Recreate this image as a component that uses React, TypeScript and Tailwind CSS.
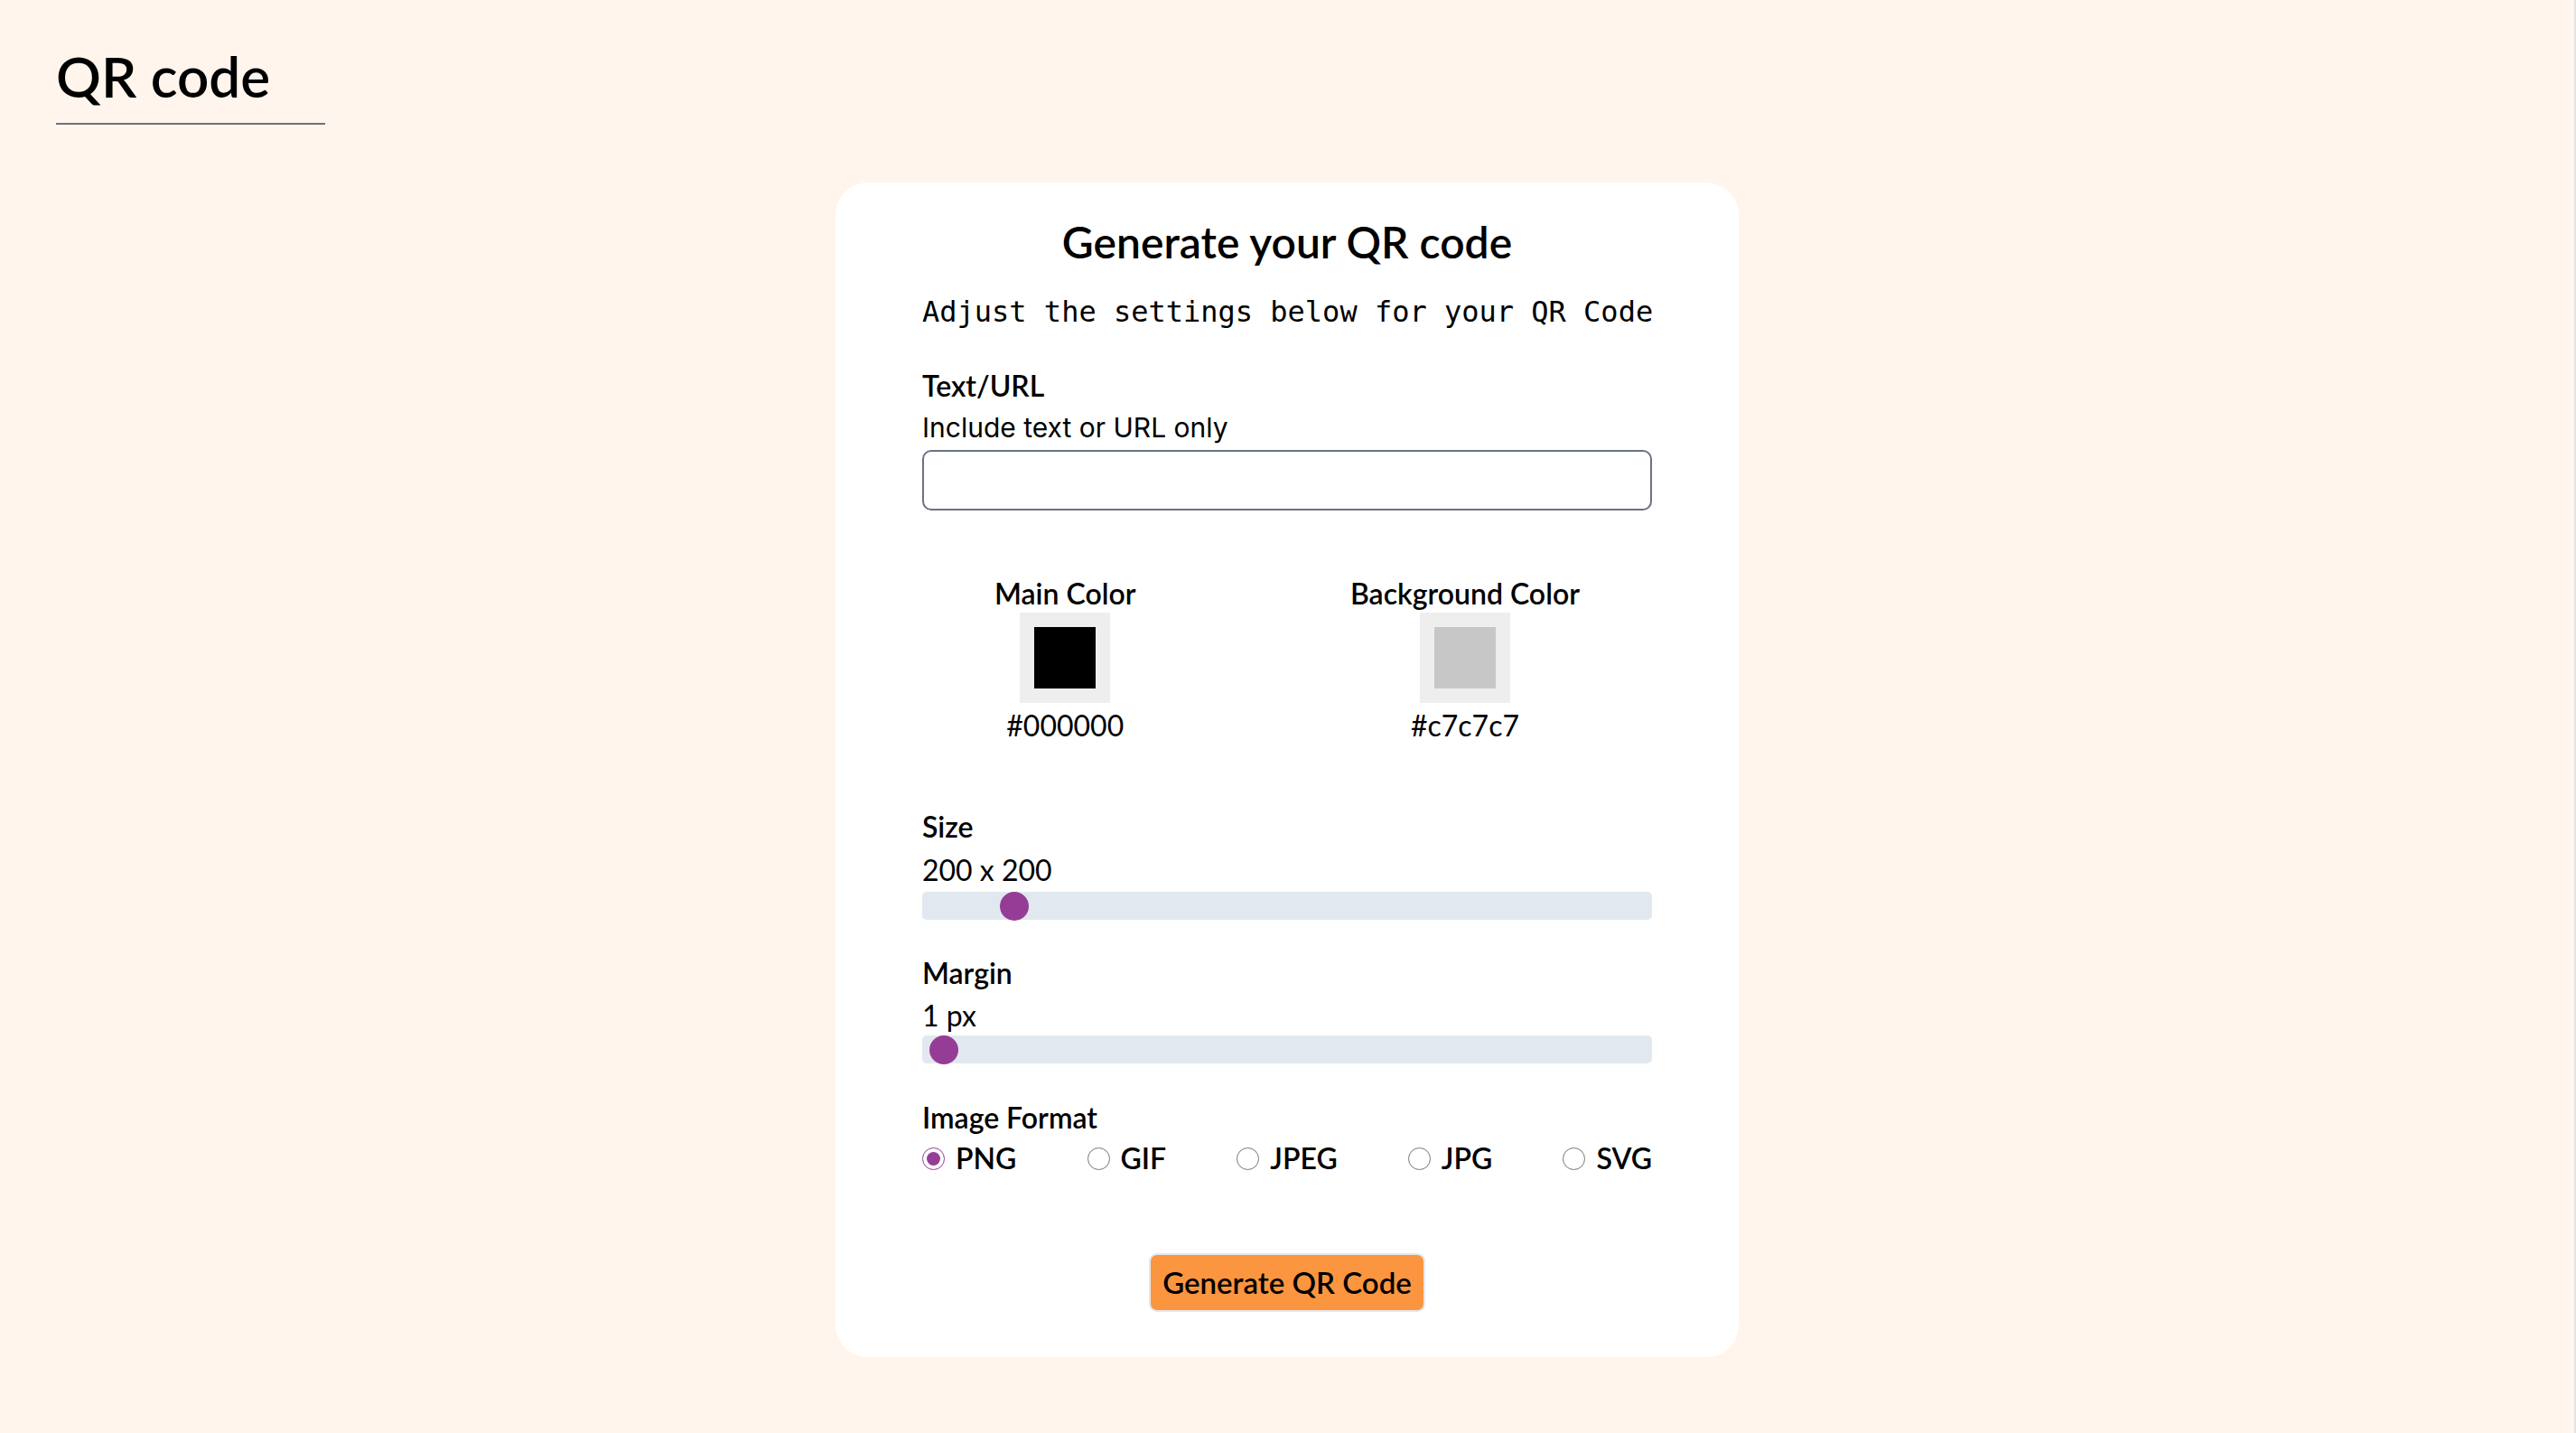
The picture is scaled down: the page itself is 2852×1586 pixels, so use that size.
import React, { useState } from "react";

function Slider({ value, min, max }: { value: number; min: number; max: number }) {
  const frac = (value - min) / (max - min);
  return (
    <div className="relative h-[31px] w-full rounded-[5px] bg-[#e2e8f0]">
      <div
        className="absolute top-[-0.5px] h-[32px] w-[32px] rounded-full bg-[#953d96]"
        style={{ left: `calc(${frac} * (100% - 32px))` }}
      />
    </div>
  );
}

function Swatch({ label, color, swatchClass }: { label: string; color: string; swatchClass: string }) {
  return (
    <div className="flex flex-col items-center">
      <div className="text-[32px] font-semibold leading-[40px] text-black">{label}</div>
      <div className="mt-[1px] flex h-[100px] w-[100px] items-center justify-center bg-[#eeeeee]">
        <div className={`h-[68px] w-[68px] ${swatchClass}`} />
      </div>
      <div className="mt-[5px] text-[32px] font-normal leading-[40px] text-black">{color}</div>
    </div>
  );
}

export default function App() {
  const [fmt, setFmt] = useState("PNG");
  const formats = ["PNG", "GIF", "JPEG", "JPG", "SVG"];
  return (
    <div className="flex min-h-[1586px] w-full bg-[#fff5ec] font-['Lato','Noto_Sans',sans-serif]">
      <div className="flex-1">
        <header className="pl-[62px] pt-[53px]">
          <h1 className="w-[298px] border-b-2 border-[#6b7280] pb-[21px] text-[62px] font-semibold leading-[62px] text-black">
            QR code
          </h1>
        </header>
        <main className="mt-[64px] flex justify-center">
          <div className="w-[1000px] rounded-[36px] bg-white px-[96px] pb-[50px] pt-[42px]">
            <h2 className="text-center text-[48px] font-semibold leading-[48px] text-black">
              Generate your QR code
            </h2>
            <p className="mt-[33px] whitespace-nowrap text-center font-['DejaVu_Sans_Mono','Liberation_Mono',monospace] text-[32px] leading-[40px] text-black">
              Adjust the settings below for your QR Code
            </p>

            <div className="mt-[42px] text-[32px] font-semibold leading-[40px] text-black">Text/URL</div>
            <div className="mt-[8px] font-['Inter','Noto_Sans',sans-serif] text-[30px] leading-[36px] text-black">
              Include text or URL only
            </div>
            <input
              type="text"
              className="mt-[7px] block h-[67px] w-full rounded-[10px] border-2 border-[#6b7280] bg-white px-4 font-['Inter',sans-serif] text-[28px] outline-none"
            />

            <div className="mt-[72px] flex justify-between px-[80px]">
              <Swatch label="Main Color" color="#000000" swatchClass="bg-[#000000]" />
              <Swatch label="Background Color" color="#c7c7c7" swatchClass="bg-[#c7c7c7]" />
            </div>

            <div className="mt-[72px] text-[32px] font-semibold leading-[40px] text-black">Size</div>
            <div className="mt-[8px] text-[32px] leading-[40px] text-black">200 x 200</div>
            <div className="mt-[4px]">
              <Slider value={200} min={100} max={1000} />
            </div>

            <div className="mt-[39px] text-[32px] font-semibold leading-[40px] text-black">Margin</div>
            <div className="mt-[7px] text-[32px] leading-[40px] text-black">1 px</div>
            <div className="mt-[2px]">
              <Slider value={1} min={0} max={100} />
            </div>

            <div className="mt-[40px] text-[32px] font-semibold leading-[40px] text-black">Image Format</div>
            <div className="mt-[5px] flex h-[40px] items-center justify-between">
              {formats.map((f) => (
                <label key={f} className="flex items-center gap-[12px]">
                  <input
                    type="radio"
                    name="fmt"
                    checked={fmt === f}
                    onChange={() => setFmt(f)}
                    className="h-[25px] w-[25px] accent-[#953d96]"
                  />
                  <span className="text-[32px] font-semibold leading-[40px] text-black">{f}</span>
                </label>
              ))}
            </div>

            <div className="mt-[85px] flex justify-center">
              <button className="h-[65px] w-[306px] rounded-[9px] border-2 border-[#e5e7eb] bg-[#fb953f] text-[33px] font-semibold leading-none text-black">
                Generate QR Code
              </button>
            </div>
          </div>
        </main>
      </div>
      <div className="w-[2px] bg-[#e3e3e3]" />
    </div>
  );
}
